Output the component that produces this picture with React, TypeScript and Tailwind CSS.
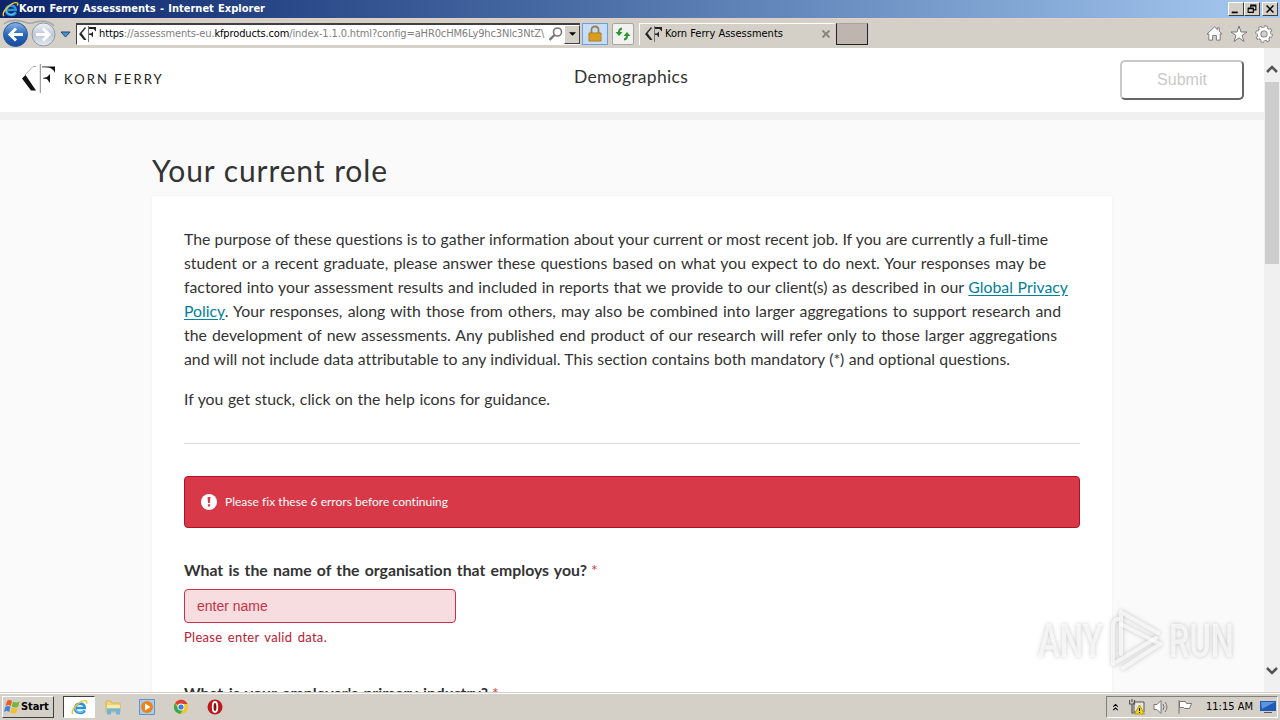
import type { ReactNode } from 'react';

const tahoma = "font-['DejaVu_Sans_Condensed','DejaVu_Sans',sans-serif]";

const paragraph: { width: string; text: ReactNode }[] = [
  { width: 'w-[864px]', text: 'The purpose of these questions is to gather information about your current or most recent job. If you are currently a full-time' },
  { width: 'w-[862px]', text: 'student or a recent graduate, please answer these questions based on what you expect to do next. Your responses may be' },
  {
    width: 'w-[884px]',
    text: (
      <>
        factored into your assessment results and included in reports that we provide to our client(s) as described in our{' '}
        <a className="text-[#00809a] underline underline-offset-2">Global Privacy</a>
      </>
    ),
  },
  {
    width: 'w-[877px]',
    text: (
      <>
        <a className="text-[#00809a] underline underline-offset-2">Policy</a>. Your responses, along with those from others, may also be combined into larger aggregations to support research and
      </>
    ),
  },
  { width: 'w-[873px]', text: 'the development of new assessments. Any published end product of our research will refer only to those larger aggregations' },
  { width: 'w-[826px]', text: 'and will not include data attributable to any individual. This section contains both mandatory (*) and optional questions.' },
];

function KfMark({ className }: { className?: string }) {
  return (
    <svg viewBox="0 0 34 30" className={className} fill="#111">
      <path d="M0 14.500 3.500 11 14 26.500H9Z" />
      <path d="M3 11 11 2.500H14" fill="none" stroke="#999" strokeWidth=".8" />
      <path d="M17.800 0h1v29h-1z" fill="#888" />
      <path d="M20 2.500h13V9Q31 4 26 3.500L20 3.200ZM21 14l4-1 3-3v9l-3-4-4-.5Z" />
    </svg>
  );
}

function KfFavicon() {
  return (
    <svg viewBox="0 0 17 16" className="h-4 w-[17px]" fill="#222">
      <path d="M0 8 2 6.500 7.500 14H5Z" />
      <path d="M1.500 7.500 6.500 1.500" fill="none" stroke="#333" strokeWidth="1.500" />
      <path d="M9 0h1v16H9z" fill="#777" />
      <path d="M10 1h7v4.500l-2.500-2.500H10ZM10 7.500h2L14 5.500v6L12 9h-2Z" />
    </svg>
  );
}

function IeLogo({ className }: { className?: string }) {
  return (
    <svg viewBox="0 0 18 18" className={className} fill="none">
      <path d="M14.500 12C12.500 16 4.500 15.500 4.500 9.700 4.500 3.500 14.500 3 14.500 9.500H5" stroke="#2b93dc" strokeWidth="2.800" />
      <path d="M14 12C12 15.500 5 15 4.500 9.500" stroke="#7bd3f6" strokeWidth="1" />
      <path d="M2 16C-1.500 12 11 0 16 2c1 .5.800 1.800.2 3" stroke="#f2c62c" strokeWidth="1.500" />
    </svg>
  );
}

function TitleBar() {
  return (
    <div className={`${tahoma} flex h-[18px] shrink-0 items-center bg-linear-to-r from-[#0b246a] to-[#a6caf0] pl-[2px] pr-[2px] text-[11px] font-bold text-white`}>
      <IeLogo className="size-[17px]" />
      <span className="w-[246px] whitespace-nowrap [text-align-last:justify]">Korn Ferry Assessments - Internet Explorer</span>
      <div className="ml-auto flex">
        {['min', 'restore', 'close'].map((kind) => (
          <svg
            key={kind}
            viewBox="0 0 16 14"
            className={`h-[14px] w-4 border border-t-white border-l-white border-r-[#404040] border-b-[#404040] bg-[#d4d0c8] ${kind === 'close' ? 'ml-[2px]' : ''}`}
            fill="none"
            stroke="#000"
          >
            {kind === 'min' && <path d="M3 11h7" strokeWidth="2" />}
            {kind === 'restore' && <path d="M6 2.500h6.500V8H10M6 3.500h6M6.500 2v3M3.500 6.500h6V11h-6ZM3 6h7" strokeWidth="1.300" />}
            {kind === 'close' && <path d="m4 3 8 8M12 3l-8 8" strokeWidth="1.800" />}
          </svg>
        ))}
      </div>
    </div>
  );
}

function NavButtons() {
  return (
    <svg viewBox="0 0 76 30" className="h-[30px] w-[76px]">
      <defs>
        <linearGradient id="back" x2="0" y2="1">
          <stop stopColor="#8cb5e6" />
          <stop offset=".5" stopColor="#2867bb" />
          <stop offset="1" stopColor="#164a9a" />
        </linearGradient>
        <linearGradient id="forward" x2="0" y2="1">
          <stop stopColor="#f1f5f9" />
          <stop offset=".5" stopColor="#bdc8d5" />
          <stop offset="1" stopColor="#e6eaf0" />
        </linearGradient>
      </defs>
      <path d="M4 5C9 0 20 1 26 3.500Q30 5 34 3.500C42 1 50 2 54 7" fill="none" stroke="#a5a6a8" strokeWidth="1.500" />
      <circle cx="15.500" cy="15.500" r="12" fill="url(#back)" stroke="#2c5998" />
      <path d="M23 15.500H10m6-6-6 6 6 6" fill="none" stroke="#fff" strokeWidth="3" />
      <circle cx="43.500" cy="15.500" r="11.500" fill="url(#forward)" stroke="#8e99a8" />
      <path d="M36 15.500h13m-6-6 6 6-6 6" fill="none" stroke="#fff" strokeWidth="3" />
      <path d="M61 13h9l-4.500 5Z" fill="#4b94cf" stroke="#164780" />
    </svg>
  );
}

function Toolbar() {
  return (
    <div className={`${tahoma} flex h-[30px] shrink-0 items-center border-t border-[#e0d0c4] bg-[#d4d0c8] text-[11px] text-black`}>
      <NavButtons />
      <div className="flex h-[22px] w-[504px] items-center border-t-2 border-l border-t-[#404040] border-l-[#404040] border-b border-b-white bg-white pl-[2px]">
        <KfFavicon />
        <span className="ml-[3px] w-[446px] shrink-0 tracking-[-0.13px] whitespace-nowrap text-[#808080]">
          <span className="text-black">https</span>://assessments-eu.<span className="text-black">kfproducts.com</span>/index-1.1.0.html?config=aHR0cHM6Ly9hc3Nlc3NtZ\
        </span>
        <svg viewBox="0 0 14 14" className="ml-1 size-[14px] shrink-0" fill="none" stroke="#777">
          <circle cx="8.500" cy="5" r="4" strokeWidth="1.600" />
          <path d="m5.500 8-5 5" strokeWidth="2.400" />
        </svg>
        <div className="ml-auto flex h-[19px] w-4 shrink-0 items-center justify-center border border-t-white border-l-white border-r-[#404040] border-b-[#404040] bg-[#d4d0c8]">
          <svg viewBox="0 0 8 4" className="h-1 w-[7px]"><path d="M0 0h8L4 4Z" /></svg>
        </div>
      </div>
      <div className="ml-[2px] flex h-[22px] w-[26px] items-center justify-center border border-[#6a9fe0] bg-[#c7dcf8]">
        <svg viewBox="0 0 16 18" className="h-[18px] w-4">
          <path d="M4.500 9V5Q4.500 1.500 8 1.500T11.500 5v4" fill="none" stroke="#96834f" strokeWidth="1.800" />
          <path d="M2 8h12v8H2Z" fill="#e7ae26" stroke="#ad7711" />
          <path d="M3 10h10M3 12h10M3 14h10" stroke="#be831b" strokeWidth=".7" />
        </svg>
      </div>
      <div className="ml-1 flex size-[22px] items-center justify-center rounded-[2px] border border-[#a5a5a5] bg-[#f1f1ef]">
        <svg viewBox="0 0 16 16" className="size-4" fill="#2b962f">
          <path d="M7 1.500Q3 2 3 6H.5l3.500 4 3.500-4H5Q5 4 7 3.500ZM9 14.500Q13 14 13 10h2.500L12 6l-3.500 4H11q0 2-2 2.500Z" />
        </svg>
      </div>
      <div className="ml-[5px] flex h-[22px] w-[196px] items-center border-t border-l border-white pl-[5px]">
        <KfFavicon />
        <span className="ml-[3px] w-[117px] whitespace-nowrap">Korn Ferry Assessments</span>
        <svg viewBox="0 0 8 8" className="ml-auto mr-[5px] size-2" stroke="#8c867c" strokeWidth="2"><path d="m.5.5 7 7m0-7-7 7" /></svg>
      </div>
      <div className="ml-px h-[22px] w-8 border border-t-[#aaa39d] border-[#222] bg-[#bdb5ae]" />
      <div className="ml-auto mr-[7px] flex items-center gap-[7px]">
        <svg viewBox="0 0 18 18" className="size-[17px]" fill="#fff" stroke="#777"><path d="M1 9.500 9 2l3 2.800V3h2v3.500l3 3h-2V16h-4v-5H7v5H3V9.500Z" /></svg>
        <svg viewBox="0 0 18 18" className="size-[18px]" fill="#fff" stroke="#777"><path d="m9 1 2 6h6l-5 3.500 2 6-5-3.700-5 3.700 2-6L1 7h6Z" /></svg>
        <svg viewBox="0 0 18 18" className="size-[18px]" fill="none">
          <circle cx="9" cy="9" r="7" stroke="#777" strokeWidth="3.500" strokeDasharray="3 2.500" />
          <circle cx="9" cy="9" r="5" stroke="#777" strokeWidth="4.500" />
          <circle cx="9" cy="9" r="7" stroke="#fff" strokeWidth="1.800" strokeDasharray="2.200 3.300" strokeDashoffset="-.4" />
          <circle cx="9" cy="9" r="5" stroke="#fff" strokeWidth="2.800" />
        </svg>
      </div>
    </div>
  );
}

function PageHeader() {
  return (
    <header className="flex h-[72px] shrink-0 items-start border-b-8 border-[#f0f0f0] bg-white">
      <div className="flex w-[574px] items-center pt-4 pl-[22px]">
        <KfMark className="h-[30px] w-[34px]" />
        <span className="ml-2 w-[104px] font-['Lato',sans-serif] text-[13px] leading-none tracking-[2.1px] whitespace-nowrap text-[#222]">KORN FERRY</span>
      </div>
      <h1 className="w-[115px] pt-[17px] font-['Lato',sans-serif] text-[17.5px] leading-6 tracking-[0.3px] whitespace-nowrap">Demographics</h1>
      <button className="mt-3 mr-5 ml-auto h-10 w-[124px] rounded-[5px] border-2 border-t-[#c8c8c8] border-l-[#c8c8c8] border-r-[#666] border-b-[#666] font-['Liberation_Sans',sans-serif] text-base text-[#c9c9c9]">Submit</button>
    </header>
  );
}

function RoleForm() {
  return (
    <main className="ml-[152px] w-[960px] pt-[30px] font-['Lato',sans-serif] [font-variant-ligatures:none]">
      <h2 className="h-[46px] w-[236px] text-[30px] leading-10 tracking-[0.9px] whitespace-nowrap [text-align-last:justify]">Your current role</h2>
      <section className="h-[520px] bg-white px-8 pt-[31px] shadow-[0_0_2px_rgba(0,0,0,0.06)]">
        <div className="text-[15.8px] leading-6">
          {paragraph.map((line, i) => (
            <div key={i} className={`${line.width} whitespace-nowrap [text-align-last:justify]`}>{line.text}</div>
          ))}
          <p className="mt-4 w-[366px] whitespace-nowrap [text-align-last:justify]">If you get stuck, click on the help icons for guidance.</p>
        </div>
        <hr className="mt-8 border-[#e2e2e2]" />
        <div className="mt-8 flex h-[52px] items-center rounded-[4px] border border-[#b00f24] bg-[#d73948] pl-4 text-[12px] text-white">
          <svg viewBox="0 0 16 16" className="size-4">
            <circle cx="8" cy="8" r="8" fill="#fff" />
            <path d="M6.500 3h3l-.6 6H7.100ZM6.900 10.300h2.200v2.200H6.900Z" fill="#d73948" />
          </svg>
          <span className="ml-2 w-[223px] whitespace-nowrap [text-align-last:justify]">Please fix these 6 errors before continuing</span>
        </div>
        <label className="mt-[30px] flex h-6 text-[15.8px] leading-6 font-bold">
          <span className="w-[403px] whitespace-nowrap [text-align-last:justify]">What is the name of the organisation that employs you?</span>
          <span className="ml-1 font-normal text-[#d73948]">*</span>
        </label>
        <input
          placeholder="enter name"
          className="mt-[7px] block h-[34px] w-[272px] rounded-[4px] border border-[#c8324a] bg-[#f8dde0] px-3 font-['Liberation_Sans',sans-serif] text-[14px] placeholder:text-[#c63245]"
        />
        <p className="mt-1 w-[143px] text-[13px] leading-5 tracking-[0.3px] whitespace-nowrap text-[#b9202f] [text-align-last:justify]">Please enter valid data.</p>
        <label className="mt-[34px] flex h-6 text-[15.8px] leading-6 font-bold">
          <span className="w-[304px] whitespace-nowrap [text-align-last:justify]">What is your employer's primary industry?</span>
          <span className="ml-1 font-normal text-[#d73948]">*</span>
        </label>
      </section>
    </main>
  );
}

function Scrollbar() {
  return (
    <div className="flex w-4 shrink-0 flex-col items-center bg-[#f0f0f0]">
      <svg viewBox="0 0 12 8" className="mt-[17px] h-2 w-3" fill="none" stroke="#555" strokeWidth="2.500"><path d="m1 7 5-5 5 5" /></svg>
      <div className="mt-[9px] h-[182px] w-[14px] bg-[#cdcdcd]" />
      <svg viewBox="0 0 12 8" className="mt-auto mb-[17px] h-2 w-3" fill="none" stroke="#555" strokeWidth="2.500"><path d="m1 1 5 5 5-5" /></svg>
    </div>
  );
}

function Watermark() {
  return (
    <div className="absolute top-[609px] left-[1038px] flex items-center font-['Roboto',sans-serif] text-[47px] leading-[64px] font-medium text-white/70 [filter:drop-shadow(0_0_2px_rgba(0,0,0,0.3))]">
      <span className="w-[67px] origin-left scale-x-[0.7] whitespace-nowrap">ANY</span>
      <svg viewBox="0 0 60 64" className="h-16 w-[62px]" fill="none" stroke="currentColor" strokeWidth="4" strokeLinejoin="round" strokeLinecap="round">
        <path d="M12 10Q7 11 7 17V55L50 29" />
        <path d="M52 24 15 3V45" />
        <path d="M15 15 54 35 17 59" />
      </svg>
      <span className="ml-[2px] w-[66px] origin-left scale-x-[0.69] whitespace-nowrap">RUN</span>
    </div>
  );
}

function Taskbar() {
  return (
    <div className={`${tahoma} flex h-7 shrink-0 items-center border-t border-[#d4d0c8] bg-[#d4d0c8] pt-px pl-[2px] pr-[2px] text-[11px] text-black shadow-[inset_0_1px_#fff]`}>
      <div className="flex h-[22px] w-[52px] items-center border border-t-white border-l-white border-r-[#404040] border-b-[#404040] pl-px font-bold">
        <svg viewBox="0 0 16 16" className="size-4 shrink-0">
          <path d="M3 2q3-2 5 0L6.800 7Q4.500 5 1.500 7Z" fill="#e95d29" />
          <path d="M9 2.500q3 2 6.500 0l-1.300 5q-3 2-6.400 0Z" fill="#71b63c" />
          <path d="M1.200 8q3-2 5.300 0l-1.300 5q-2.500-2-5.200 0Z" fill="#4086d5" />
          <path d="M7.500 8.500q3 2 6.300 0l-1.300 5q-3 2-6.300 0Z" fill="#f4bf2b" />
        </svg>
        <span className="ml-px tracking-[-0.1px]">Start</span>
      </div>
      <div className="ml-[9px] flex h-[22px] w-8 items-center justify-center border border-t-[#404040] border-l-[#404040] border-white bg-white"><IeLogo className="size-[17px]" /></div>
      <svg viewBox="0 0 16 16" className="ml-[10px] size-4">
        <path d="M1 2h5l1 2h8v9H1Z" fill="#efd577" stroke="#d5b457" />
        <path d="M2 6h13v3H2Z" fill="#f9eaac" />
        <path d="M2 15.500V9.500h13v6h-4v-3H6v3Z" fill="#6db5e3" />
      </svg>
      <svg viewBox="0 0 16 16" className="ml-[18px] size-4">
        <path d="M.5.5h15v15H.5Z" fill="#a9cdf0" stroke="#5b94d0" />
        <circle cx="8" cy="8" r="6" fill="#ef8215" />
        <path d="M6 4.500 11.500 8 6 11.500Z" fill="#fff" />
      </svg>
      <svg viewBox="0 0 16 16" className="ml-[18px] size-4">
        <circle cx="8" cy="8" r="7" fill="#f5c528" />
        <path d="M8 8 2 4.300A7 7 0 0 1 14.500 5H8Z" fill="#dc3e31" />
        <path d="M2 4.300A7 7 0 0 0 7.500 15L10 9.500 5 9Z" fill="#39a853" />
        <circle cx="8" cy="8" r="3.400" fill="#fff" /><circle cx="8" cy="8" r="2.600" fill="#3c7de0" />
      </svg>
      <svg viewBox="0 0 16 16" className="ml-[18px] size-4">
        <circle cx="8" cy="8" r="7.500" fill="#bf171d" />
        <ellipse cx="8" cy="8" rx="2.300" ry="5" fill="#8b0c12" stroke="#fff" strokeWidth="1.800" />
      </svg>
      <div className="ml-auto flex h-[22px] w-[172px] items-center border border-t-[#808080] border-l-[#808080] border-white">
        <svg viewBox="0 0 8 10" className="ml-[5px] h-[9px] w-[7px]" fill="none" stroke="#000" strokeWidth="1.300"><path d="m1.500 4 2.500-2.500L6.500 4m-5 4L4 5.500 6.500 8" /></svg>
        <svg viewBox="0 0 16 16" className="ml-[10px] size-4">
          <path d="M5 3h10v10H5Z" fill="#e4eadb" stroke="#555" />
          <path d="M.5 1v4h5V1M3 0v3M3 5v9h3" fill="none" stroke="#555" strokeWidth="1.200" />
          <path d="m10.500 6 5 9h-10Z" fill="#f2d218" stroke="#b59a12" />
          <path d="M10.500 9v3m0 1v1" stroke="#000" />
        </svg>
        <svg viewBox="0 0 16 16" className="ml-[8px] size-4" fill="none" stroke="#777"><path d="M1 5.500h3L8 1.500v13l-4-4H1Z" fill="#fff" /><path d="M10 5q2 3 0 6M12 3q4 5 0 10" /></svg>
        <svg viewBox="0 0 16 16" className="ml-[8px] size-4" fill="#fff" stroke="#777"><path d="M2 1v14M2.500 2.500h6l1 2h5l-2 5h-5l-1-1h-4Z" /></svg>
        <span className="ml-[13px] w-[46px] whitespace-nowrap [text-align-last:justify]">11:15 AM</span>
        <svg viewBox="0 0 16 14" className="ml-[8px] h-[14px] w-4"><path d="M0 1h16v10H0Z" fill="#225bb5" /><path d="M1 2h14L2 9Z" fill="#5a96df" /><path d="M4 12h8v1H4Z" fill="#555" /></svg>
      </div>
    </div>
  );
}

export default function App() {
  return (
    <div className="relative flex h-[720px] w-[1280px] flex-col overflow-hidden bg-[#fafafa] text-[#333]">
      <TitleBar />
      <Toolbar />
      <div className="flex min-h-0 flex-1">
        <div className="flex min-w-0 flex-1 flex-col overflow-hidden">
          <PageHeader />
          <RoleForm />
        </div>
        <Scrollbar />
      </div>
      <Taskbar />
      <Watermark />
    </div>
  );
}
